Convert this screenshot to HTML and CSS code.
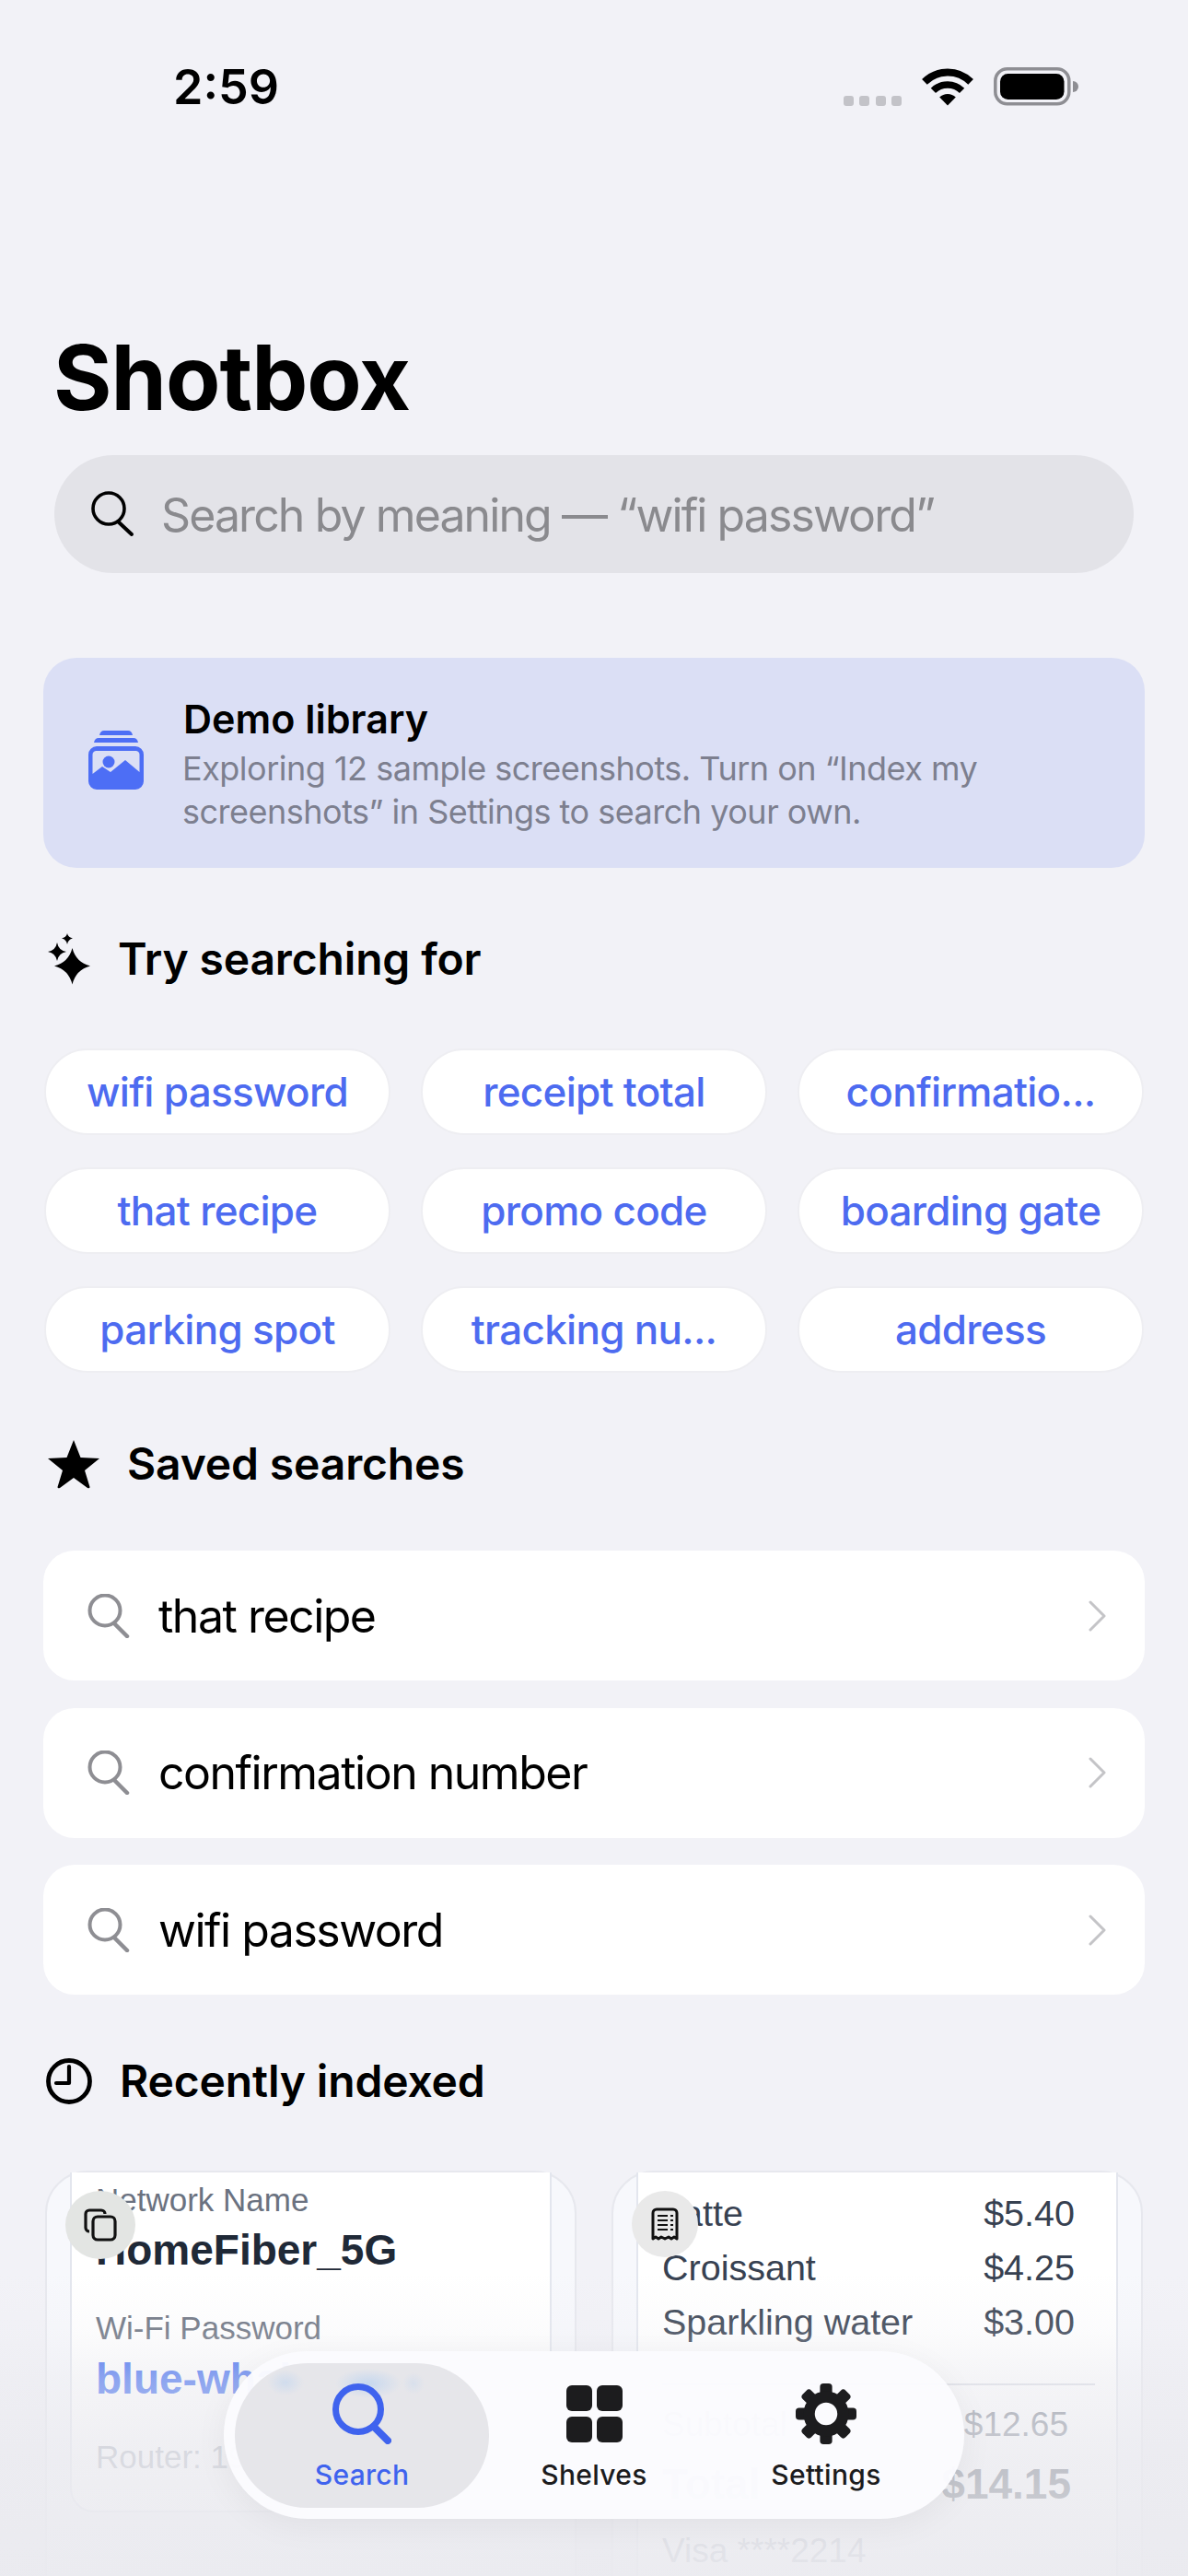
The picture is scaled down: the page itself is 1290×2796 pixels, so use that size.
FILE: index.html
```html
<!DOCTYPE html>
<html lang="en">
<head>
<meta charset="utf-8">
<title>Shotbox</title>
<link rel="stylesheet" href="styles.css">
</head>
<body>
<div class="screen">
  <header class="status">
    <span class="time">2:59</span>
    <div class="status-icons">
      <div class="signal"><i></i><i></i><i></i><i></i></div>
      <svg class="wifi" width="56" height="42" viewBox="0 0 56 42"><path d="M2.900 15.900A35.500 35.500 0 0 1 53.100 15.900" fill="none" stroke="#000" stroke-width="8"/><path d="M12.400 25.400A22.100 22.100 0 0 1 43.600 25.400" fill="none" stroke="#000" stroke-width="7.500"/><path d="M28 41.500 19.200 32.500A12.600 12.600 0 0 1 36.800 32.500Z" fill="#000"/></svg>
      <svg class="battery" width="92" height="42" viewBox="0 0 92 42"><rect x="1.800" y="1.800" width="80" height="38" rx="13" fill="none" stroke="#8e8e93" stroke-width="3.500"/><rect x="7" y="7" width="69.500" height="28" rx="8.500" fill="#000"/><path d="M86 15a6 6 0 0 1 0 12Z" fill="#8e8e93"/></svg>
    </div>
  </header>

  <h1 class="title">Shotbox</h1>

  <div class="search">
    <svg class="search-icon" width="50" height="50" viewBox="0 0 50 50"><circle cx="19" cy="19" r="17" fill="none" stroke="#000" stroke-width="3.600"/><path d="M29 33 44 47" fill="none" stroke="#000" stroke-width="4" stroke-linecap="round"/></svg>
    <span class="placeholder">Search by meaning — “wifi password”</span>
  </div>

  <section class="banner">
    <svg class="banner-icon" width="60" height="64" viewBox="0 0 60 64"><path d="M12 5Q13 0 17 0H43Q47 0 48 5Z" fill="#4d6ef5"/><path d="M6 13Q7 8 11 8H49Q53 8 54 13Z" fill="#4d6ef5"/><path fill-rule="evenodd" d="M9 17H51A9 9 0 0 1 60 26V55A9 9 0 0 1 51 64H9A9 9 0 0 1 0 55V26A9 9 0 0 1 9 17ZM9 22A4 4 0 0 0 4.500 26V47L15 39 24 45 40 32 55.500 45V26A4 4 0 0 0 51 22Z" fill="#4d6ef5"/><circle cx="22" cy="34" r="6.500" fill="#4d6ef5"/></svg>
    <div class="banner-text">
      <h2 class="banner-title">Demo library</h2>
      <p class="banner-sub">Exploring 12 sample screenshots. Turn on “Index my<br>screenshots” in Settings to search your own.</p>
    </div>
  </section>

  <h2 class="heading heading-try">
    <svg class="h-icon" width="46" height="56" viewBox="0 0 46 56"><path d="M26.500 16Q30.500 31.500 46 35.500 30.500 39.500 26.500 55.500 22.500 39.500 7 35.500 22.500 31.500 26.500 16Z"/><path d="M21 0Q22 4.500 27 5.500 22 6.500 21 12 20 6.500 15 5.500 20 4.500 21 0Z"/><path d="M10 10Q11.500 18.500 20 20 11.500 21.500 10 30 8.500 21.500 0 20 8.500 18.500 10 10Z"/></svg>
    Try searching for
  </h2>

  <div class="chips">
    <div class="chip">wifi password</div>
    <div class="chip">receipt total</div>
    <div class="chip">confirmatio...</div>
    <div class="chip">that recipe</div>
    <div class="chip">promo code</div>
    <div class="chip">boarding gate</div>
    <div class="chip">parking spot</div>
    <div class="chip">tracking nu...</div>
    <div class="chip">address</div>
  </div>

  <h2 class="heading heading-saved">
    <svg class="h-icon" width="58" height="54" viewBox="0 0 58 54"><path d="M29 1 36.500 20 57 21 41 34 46.500 52Q46.500 54 44 53L29 42 14 53Q11.500 54 11.500 52L17 34 1 21 21.500 20Z"/></svg>
    Saved searches
  </h2>

  <div class="rows">
    <div class="row">
      <svg class="row-icon" width="48" height="48" viewBox="0 0 48 48"><circle cx="20" cy="18" r="16.500" fill="none" stroke="#8e8e93" stroke-width="4"/><path d="M30 32 44 46" fill="none" stroke="#8e8e93" stroke-width="4.500" stroke-linecap="round"/></svg>
      <span class="row-text">that recipe</span>
      <svg class="chev" width="20" height="34" viewBox="0 0 20 34"><path d="M2 2 17 17 2 32" fill="none" stroke="#c4c4c7" stroke-width="3" stroke-linecap="round" stroke-linejoin="round"/></svg>
    </div>
    <div class="row">
      <svg class="row-icon" width="48" height="48" viewBox="0 0 48 48"><circle cx="20" cy="18" r="16.500" fill="none" stroke="#8e8e93" stroke-width="4"/><path d="M30 32 44 46" fill="none" stroke="#8e8e93" stroke-width="4.500" stroke-linecap="round"/></svg>
      <span class="row-text">confirmation number</span>
      <svg class="chev" width="20" height="34" viewBox="0 0 20 34"><path d="M2 2 17 17 2 32" fill="none" stroke="#c4c4c7" stroke-width="3" stroke-linecap="round" stroke-linejoin="round"/></svg>
    </div>
    <div class="row">
      <svg class="row-icon" width="48" height="48" viewBox="0 0 48 48"><circle cx="20" cy="18" r="16.500" fill="none" stroke="#8e8e93" stroke-width="4"/><path d="M30 32 44 46" fill="none" stroke="#8e8e93" stroke-width="4.500" stroke-linecap="round"/></svg>
      <span class="row-text">wifi password</span>
      <svg class="chev" width="20" height="34" viewBox="0 0 20 34"><path d="M2 2 17 17 2 32" fill="none" stroke="#c4c4c7" stroke-width="3" stroke-linecap="round" stroke-linejoin="round"/></svg>
    </div>
  </div>

  <h2 class="heading heading-recent">
    <svg class="h-icon" width="50" height="50" viewBox="0 0 50 50"><circle cx="25" cy="25" r="22.500" fill="none" stroke="#000" stroke-width="4.800"/><path d="M25 9V27H11" fill="none" stroke="#000" stroke-width="4.200" stroke-linecap="round" stroke-linejoin="round"/></svg>
    Recently indexed
  </h2>

  <div class="cards">
    <article class="card">
      <div class="shot shot-wifi">
        <div class="lbl lbl-first">Network Name</div>
        <div class="val">HomeFiber_5G</div>
        <div class="lbl lbl-gap">Wi-Fi Password</div>
        <div class="val val-blue">blue-whale-4821</div>
        <div class="lbl lbl-gap lbl-mute">Router: 192.168.1.1</div>
      </div>
      <div class="badge">
        <svg width="36" height="36" viewBox="0 0 36 36"><path d="M6 25A4 4 0 0 1 2 21V6A4 4 0 0 1 6 2H19A4 4 0 0 1 23 6" fill="none" stroke="#111" stroke-width="3.200"/><rect x="10" y="9" width="24" height="25" rx="5" fill="none" stroke="#111" stroke-width="3.200"/></svg>
      </div>
    </article>
    <article class="card">
      <div class="shot shot-receipt">
        <div class="line"><span>Latte</span><span>$5.40</span></div>
        <div class="line"><span>Croissant</span><span>$4.25</span></div>
        <div class="line"><span>Sparkling water</span><span>$3.00</span></div>
        <div class="rule"></div>
        <div class="line line-sub"><span>Subtotal</span><span>$12.65</span></div>
        <div class="line line-total"><span>Total</span><span>$14.15</span></div>
        <div class="line line-visa"><span>Visa ****2214</span></div>
      </div>
      <div class="badge badge-alt">
        <svg width="30" height="36" viewBox="0 0 30 36"><path d="M2 34V6A4 4 0 0 1 6 2H24A4 4 0 0 1 28 6V34L25 32 22 34 19 32 15 34 11 32 8 34 5 32Z" fill="none" stroke="#111" stroke-width="3" stroke-linejoin="round"/><path d="M7 9H18M7 14H18M7 19H18M7 24H18M21 9H24M21 14H24M21 19H24M21 24H24" stroke="#111" stroke-width="2.200"/></svg>
      </div>
    </article>
  </div>

  <div class="fade"></div>

  <nav class="tabs">
    <div class="tab tab-on">
      <svg class="tab-icon" width="64" height="66" viewBox="0 0 64 66"><circle cx="28" cy="28" r="24.500" fill="none" stroke="#3f63ee" stroke-width="7"/><path d="M45 47 60 62" fill="none" stroke="#3f63ee" stroke-width="8" stroke-linecap="round"/></svg>
      <span class="tab-label">Search</span>
    </div>
    <div class="tab">
      <svg class="tab-icon" width="64" height="66" viewBox="0 0 64 66"><rect x="2" y="2" width="28" height="28" rx="6" fill="#1c1c1e"/><rect x="35" y="2" width="28" height="28" rx="6" fill="#1c1c1e"/><rect x="2" y="36" width="28" height="28" rx="6" fill="#1c1c1e"/><rect x="35" y="36" width="28" height="28" rx="6" fill="#1c1c1e"/></svg>
      <span class="tab-label">Shelves</span>
    </div>
    <div class="tab">
      <svg class="tab-icon" width="70" height="70" viewBox="-35 -35 70 70"><defs><rect id="tooth" x="-7" y="-35" width="14" height="16" rx="4" fill="#1c1c1e"/></defs><use href="#tooth"/><use href="#tooth" transform="rotate(45)"/><use href="#tooth" transform="rotate(90)"/><use href="#tooth" transform="rotate(135)"/><use href="#tooth" transform="rotate(180)"/><use href="#tooth" transform="rotate(225)"/><use href="#tooth" transform="rotate(270)"/><use href="#tooth" transform="rotate(315)"/><path fill-rule="evenodd" d="M0-26A26 26 0 1 1 0 26 26 26 0 1 1 0-26ZM0-13A13 13 0 1 0 0 13 13 13 0 1 0 0-13Z" fill="#1c1c1e"/></svg>
      <span class="tab-label">Settings</span>
    </div>
  </nav>
</div>
</body>
</html>
```

FILE: styles.css
```css
* { box-sizing: border-box; }
html, body { margin: 0; padding: 0; }
body { background: #f2f2f7; font-family: Inter, "Liberation Sans", sans-serif; color: #000; }

.screen { position: relative; width: 1290px; height: 2796px; overflow: hidden; padding: 0 47px; background: #f2f2f7; }

.status { display: flex; justify-content: space-between; align-items: flex-start; height: 355px; padding: 73px 72px 0 141px; }
.time { font-size: 52px; font-weight: 600; line-height: 44px; }
.status-icons { display: flex; align-items: flex-end; gap: 22px; }
.signal { display: flex; gap: 6.500px; }
.signal i { display: block; width: 11px; height: 11px; border-radius: 3px; background: #c3c3c8; }
.wifi, .battery { display: block; }

.title { margin: 0 0 29px 11px; height: 110px; font-size: 97px; line-height: 110px; font-weight: 700; letter-spacing: -1px; }

.search { display: flex; align-items: center; gap: 26px; height: 128px; margin: 0 12px 92px; padding-left: 40px; border-radius: 64px; background: #e3e3e8; }
.search-icon { flex: none; }
.placeholder { padding-top: 2px; font-size: 50px; letter-spacing: -1.900px; color: #8a8a8e; }

.banner { display: flex; align-items: center; gap: 42px; height: 228px; margin-bottom: 70px; padding: 0 49px; border-radius: 36px; background: #dbdff5; }
.banner-icon { flex: none; margin-bottom: 6px; }
.banner-text { padding-top: 3px; }
.banner-title { margin: 0 0 0 1px; font-size: 43px; line-height: 50px; font-weight: 600; }
.banner-sub { margin: 6px 0 0; font-size: 36px; line-height: 46.500px; letter-spacing: -.5px; color: #7d7f8f; }

.heading { display: flex; align-items: center; margin: 0; height: 60px; padding-bottom: 3px; font-size: 48px; font-weight: 600; letter-spacing: -.15px; }
.h-icon { flex: none; display: block; }
.heading-try { gap: 30px; padding-left: 5px; margin-bottom: 66px; }
.heading-saved { gap: 29px; padding-left: 4px; margin-bottom: 63px; }
.heading-recent { gap: 30px; padding-left: 3px; margin-bottom: 66px; }

.chips { display: grid; grid-template-columns: repeat(3, 1fr); gap: 35px 33px; margin: 0 1px 70px 1px; }
.chip { display: flex; align-items: center; justify-content: center; height: 94px; border-radius: 47px; background: #fff; border: 2px solid #eeeef2; font-size: 44px; font-weight: 500; letter-spacing: -.7px; color: #4d6bf0; }

.rows { display: flex; flex-direction: column; gap: 29.500px; margin-bottom: 65px; }
.row { display: flex; align-items: center; height: 141px; padding: 0 41px 0 47px; border-radius: 34px; background: #fff; }
.row-icon { flex: none; }
.row-text { flex: 1; margin-left: 30px; font-size: 50px; letter-spacing: -1.500px; }
.chev { flex: none; }

.cards { display: grid; grid-template-columns: 577px 577px; gap: 38px; margin: 0 2px; }
.card { position: relative; height: 600px; padding: 0 25px; border: 2px solid #e7e8ee; border-radius: 46px; background: #f7f8fc; font-family: "Liberation Sans", Arial, sans-serif; }
.shot { background: #fff; border: solid #e3e6ee; border-width: 0 2px 2px; }
.shot-wifi { height: 369px; padding: 10px 26px 0; border-radius: 0 0 26px 26px; overflow: hidden; }
.shot-receipt { height: 598px; padding: 21px 45px 0 26px; }

.lbl { font-size: 35px; line-height: 40px; color: #6b7280; white-space: nowrap; }
.lbl-gap { margin-top: 37px; }
.val { margin-top: 6px; font-size: 46px; line-height: 56px; font-weight: 700; color: #1f2937; white-space: nowrap; }
.val-blue { margin-top: 7px; color: #2f5ff0; }
.lbl-mute { color: #9ca3af; }

.line { display: flex; justify-content: space-between; font-size: 39.500px; line-height: 46px; color: #374151; margin-bottom: 13px; }
.rule { height: 2px; margin: 44px -22px 20px 0; background: #d8dbe3; }
.line-sub { font-size: 37px; margin-bottom: 13px; padding-right: 7px; color: #6b7280; }
.line-total { font-size: 46px; line-height: 56px; font-weight: 700; margin-bottom: 22px; padding-right: 4px; color: #1f2937; }
.line-visa { font-size: 37px; color: #9ca3af; }

.badge { position: absolute; left: 20px; top: 20px; width: 76px; height: 74px; display: flex; align-items: center; justify-content: center; border-radius: 50%; background: #e3e5e3; }
.badge-alt { width: 72px; height: 72px; background: #e9e9e9; }

.fade { position: absolute; left: 0; right: 0; bottom: 0; height: 356px; background: linear-gradient(to bottom, rgba(234,234,239,0) 8%, rgba(234,234,239,.16) 25%, rgba(234,234,239,.5) 40%, rgba(234,234,239,.78) 64%, rgba(234,234,239,.92) 100%); }

.tabs { position: absolute; left: 243px; top: 2552px; width: 804px; height: 182px; display: grid; grid-template-columns: 276px 1fr 276px; padding: 13px 12px 12px; border-radius: 91px; background: rgba(251,251,254,.97); box-shadow: 0 8px 36px rgba(0,0,0,.05); }
.tab { display: flex; flex-direction: column; align-items: center; justify-content: flex-start; padding-top: 22px; border-radius: 79px; }
.tab-on { background: radial-gradient(ellipse 20px 14px at 55px 21px, rgba(190,212,240,.55), transparent), radial-gradient(ellipse 36px 16px at 145px 22px, rgba(190,212,240,.8), transparent), radial-gradient(ellipse 12px 12px at 194px 22px, rgba(190,212,240,.35), transparent), #e6e6ea; }
.tab-icon { display: block; height: 66px; flex: none; }
.tab-label { margin-top: 15px; font-size: 30px; line-height: 36px; font-weight: 500; letter-spacing: .3px; color: #1c1c1e; }
.tab-on .tab-label { color: #3f63ee; }
```
